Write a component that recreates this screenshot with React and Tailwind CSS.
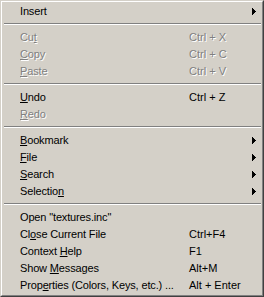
import React from 'react';

const items = [
  { type: 'item', label: 'Insert', sub: true },
  { type: 'sep' },
  { type: 'item', label: 'Cut', u: 2, key: 'Ctrl + X', disabled: true },
  { type: 'item', label: 'Copy', u: 0, key: 'Ctrl + C', disabled: true },
  { type: 'item', label: 'Paste', u: 0, key: 'Ctrl + V', disabled: true },
  { type: 'sep' },
  { type: 'item', label: 'Undo', u: 0, key: 'Ctrl + Z' },
  { type: 'item', label: 'Redo', u: 0, disabled: true },
  { type: 'sep' },
  { type: 'item', label: 'Bookmark', u: 0, sub: true },
  { type: 'item', label: 'File', u: 0, sub: true },
  { type: 'item', label: 'Search', u: 0, sub: true },
  { type: 'item', label: 'Selection', u: 8, sub: true },
  { type: 'sep' },
  { type: 'item', label: 'Open "textures.inc"' },
  { type: 'item', label: 'Close Current File', u: 2, key: 'Ctrl+F4' },
  { type: 'item', label: 'Context Help', u: 8, key: 'F1' },
  { type: 'item', label: 'Show Messages', u: 5, key: 'Alt+M' },
  { type: 'item', label: 'Properties (Colors, Keys, etc.) ...', u: 4, key: 'Alt + Enter' },
];

const Label = ({ text, u }) => {
  if (u === undefined) return <span>{text}</span>;
  return (
    <span>
      {text.slice(0, u)}
      <span className="underline underline-offset-[1px]">{text[u]}</span>
      {text.slice(u + 1)}
    </span>
  );
};

const Arrow = () => (
  <svg width="4" height="7" viewBox="0 0 4 7" className="block ml-[1px]">
    <path d="M0 0 L4 3.5 L0 7 Z" fill="#000" shapeRendering="crispEdges" />
  </svg>
);

const App = () => {
  return (
    <div
      className="w-[264px] h-[297px] bg-[#d4d0c8] border border-t-[#d4d0c8] border-l-[#d4d0c8] border-r-[#404040] border-b-[#404040] overflow-hidden"
      style={{ fontFamily: '"Liberation Sans", Arial, sans-serif' }}
    >
      <div className="h-full border border-t-white border-l-white border-r-[#808080] border-b-[#808080] p-[1px] text-[11px] leading-[17px] text-black">
        {items.map((it, i) =>
          it.type === 'sep' ? (
            <div key={i} className="h-[9px] pt-[3px] ml-[1px]">
              <div className="h-px bg-[#808080]" />
              <div className="h-px bg-white" />
            </div>
          ) : (
            <div
              key={i}
              className={`h-[17px] flex items-center pl-[17px] ${it.disabled ? 'text-[#808080] [text-shadow:1px_1px_0_#fff]' : ''}`}
            >
              <div className="w-[169px] min-w-0 shrink-0 whitespace-nowrap tracking-[-0.15px]">
                <Label text={it.label} u={it.u} />
              </div>
              <div className="w-[62px] shrink-0 whitespace-nowrap">{it.key || ''}</div>
              {it.sub && <Arrow />}
            </div>
          )
        )}
      </div>
    </div>
  );
};

export default App;
